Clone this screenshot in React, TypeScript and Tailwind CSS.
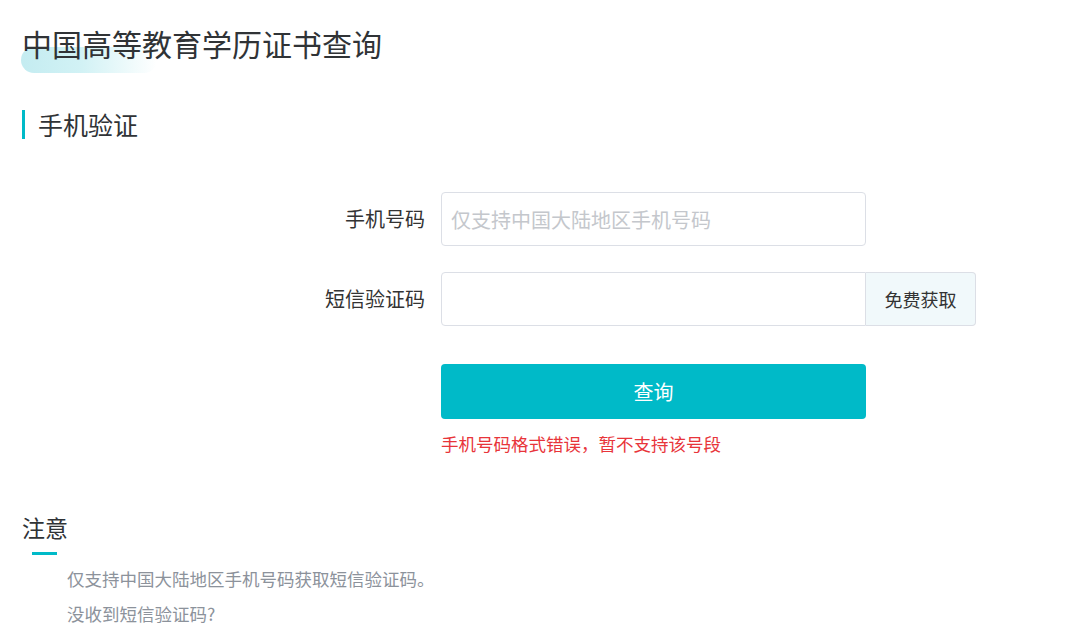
import React from "react";

const font = { fontFamily: '"Noto Sans CJK SC", "Noto Sans", sans-serif' };

export default function App() {
  return (
    <div className="h-[629px] w-[1070px] overflow-hidden bg-white pl-[22px] text-[#333]" style={font}>
      <div className="relative mt-[23px] inline-block">
        <div className="absolute left-[-1px] top-[24px] h-[26px] w-[136px] rounded-full bg-[linear-gradient(90deg,#c4ecf1_0%,#d2f2f5_45%,#ffffff_100%)]" />
        <h1 className="relative text-[30px] leading-[40px] text-[#303336]">中国高等教育学历证书查询</h1>
      </div>

      <div className="mt-[46px] flex items-center">
        <div className="h-[29px] w-[3px] bg-[#00bac8]" />
        <h2 className="ml-[13px] text-[25px] leading-[30px] text-[#303336]">手机验证</h2>
      </div>

      <div className="mt-[53px] grid grid-cols-[403px_425px] items-center gap-x-4">
        <label className="text-right text-[20px] leading-[54px]">手机号码</label>
        <input
          className="h-[54px] rounded border border-[#dcdfe6] px-[9px] text-[20px] outline-none placeholder:text-[#c4c7cc]"
          placeholder="仅支持中国大陆地区手机号码"
          style={font}
        />

        <label className="mt-[26px] text-right text-[20px] leading-[54px]">短信验证码</label>
        <div className="mt-[26px] flex w-[535px]">
          <input className="h-[54px] w-[425px] rounded-l border border-[#dcdfe6] outline-none" />
          <button className="h-[54px] w-[110px] rounded-r border border-l-0 border-[#dcdfe6] bg-[#f1f9fb] text-[18px] text-[#333]">
            免费获取
          </button>
        </div>

        <div />
        <button className="mt-[38px] h-[55px] rounded bg-[#00bac8] text-[20px] text-white">查询</button>

        <div />
        <p className="mt-[12px] text-[17.5px] leading-[26px] text-[#e8343a]">手机号码格式错误，暂不支持该号段</p>
      </div>

      <div className="mt-[54px]">
        <h3 className="text-[23px] leading-[32px] text-[#303336]">注意</h3>
        <div className="ml-[10px] mt-[9px] h-[3px] w-[25px] bg-[#00bac8]" />
        <ul className="ml-[45px] mt-[6px] text-[17.5px] leading-[35px] text-[#8c929b]">
          <li>仅支持中国大陆地区手机号码获取短信验证码。</li>
          <li>没收到短信验证码?</li>
        </ul>
      </div>
    </div>
  );
}
